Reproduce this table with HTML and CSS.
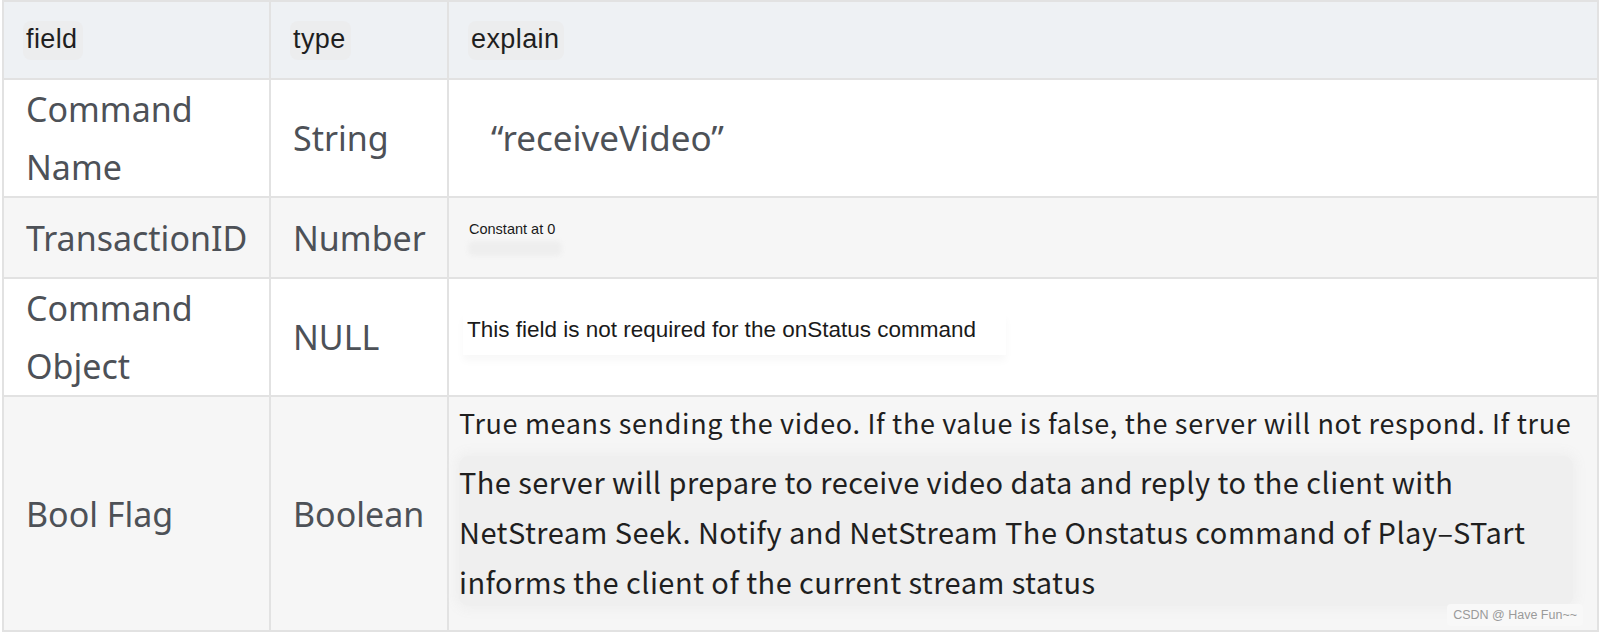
FILE: index.html
```html
<!DOCTYPE html>
<html lang="en">
<head>
<meta charset="UTF-8">
<meta name="viewport" content="width=device-width, initial-scale=1.0">
<title>receiveVideo command</title>
<link rel="stylesheet" href="styles.css">
</head>
<body>
    <table class="fields">
        <colgroup>
            <col class="col-field">
            <col class="col-type">
            <col class="col-explain">
        </colgroup>
        <thead>
            <tr class="row-head">
                <th><span class="chip">field</span></th>
                <th><span class="chip">type</span></th>
                <th><span class="chip">explain</span></th>
            </tr>
        </thead>
        <tbody>
            <tr class="row-name">
                <td class="big">Command Name</td>
                <td class="big">String</td>
                <td class="big quote">“receiveVideo”</td>
            </tr>
            <tr class="row-id shaded">
                <td class="big">TransactionID</td>
                <td class="big">Number</td>
                <td class="explain">
                    <span class="small">Constant at 0</span>
                    <span class="smudge"></span>
                </td>
            </tr>
            <tr class="row-object">
                <td class="big">Command Object</td>
                <td class="big">NULL</td>
                <td class="explain">
                    <span class="note">This field is not required for the onStatus command</span>
                </td>
            </tr>
            <tr class="row-flag shaded">
                <td class="big">Bool Flag</td>
                <td class="big">Boolean</td>
                <td class="explain top">
                    <p class="line first">True means sending the video. If the value is false, the server will not respond. If true</p>
                    <p class="line block">The server will prepare to receive video data and reply to the client with<br>NetStream Seek. Notify and NetStream The Onstatus command of Play–STart<br>informs the client of the current stream status</p>
                    <span class="watermark">CSDN @ Have Fun~~</span>
                </td>
            </tr>
        </tbody>
    </table>
</body>
</html>
```

FILE: styles.css
```css
body {
    margin: 0;
    padding: 0;
    background: white;
    font-family: "Noto Sans", "Open Sans", sans-serif;
}

.fields {
    width: 1597px;
    margin-left: 2px;
    border-collapse: collapse;
    table-layout: fixed;
    border: 2px solid #e2e2e2;
}

.col-field {
    width: 267px;
}

.col-type {
    width: 178px;
}

.fields th, .fields td {
    border: 2px solid #e2e2e2;
    padding: 0 8px 0 22px;
    vertical-align: middle;
    text-align: left;
}

/* header row */
.row-head {
    height: 78px;
    background: #eef1f4;
}

.fields th {
    font-family: "Liberation Sans", Arial, sans-serif;
    font-weight: normal;
    font-size: 27px;
    letter-spacing: 0.4px;
    color: #1f1f1f;
}

.chip {
    display: inline-block;
    padding: 3px 5px 5px 3px;
    margin-left: -3px;
    background: #ecedee;
    border-radius: 8px;
}

.row-name { height: 118px; }
.row-id { height: 81px; }
.row-object { height: 118px; }
.row-flag { height: 235px; }

.shaded {
    background: #f6f6f6;
}

.big {
    font-size: 34px;
    line-height: 58px;
    color: #4d5157;
}

.fields td.quote {
    font-size: 35px;
    padding-left: 42px;
}

.fields td.explain {
    padding-left: 20px;
}

.small {
    display: block;
    font-family: "Liberation Sans", Arial, sans-serif;
    font-size: 14.5px;
    line-height: 18px;
    color: #1a1a1a;
}

.smudge {
    display: block;
    width: 94px;
    height: 15px;
    margin: 3px 0 0 -1px;
    background: #eeeeee;
    border-radius: 6px;
    filter: blur(2px);
}

.note {
    display: inline-block;
    margin: -10px 0 0 -6px;
    padding: 4px 30px 12px 4px;
    font-family: "Liberation Sans", Arial, sans-serif;
    font-size: 22.5px;
    color: #1a1a1a;
    background: white;
    box-shadow: 0 6px 8px #f8f8f8;
}

/* Bool Flag explanation */
.fields td.top {
    vertical-align: top;
    padding-top: 4px;
    padding-left: 10px;
    position: relative;
}

.line {
    margin: 0;
    font-family: "Noto Sans CJK JP", "Noto Sans", sans-serif;
    color: #1f1f1f;
}

.first {
    font-size: 27px;
    letter-spacing: 0.65px;
    line-height: 44px;
}

.block {
    margin-top: 11px;
    margin-right: 16px;
    font-size: 29px;
    letter-spacing: 0.45px;
    line-height: 50px;
    background: #efefef;
    border-radius: 10px;
    box-shadow: 0 0 12px 4px #efefef;
}

.watermark {
    position: absolute;
    right: 14px;
    bottom: 4px;
    padding: 4px 6px;
    font-family: "Liberation Sans", Arial, sans-serif;
    font-size: 12.5px;
    letter-spacing: 0;
    color: #9a9a9a;
    background: #f8f8f8;
    border-radius: 4px;
}
```
